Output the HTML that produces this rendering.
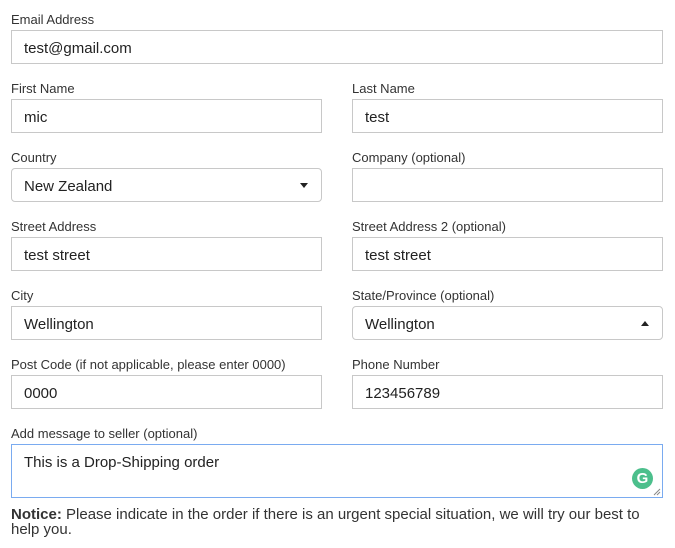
<!DOCTYPE html>
<html><head><meta charset="utf-8"><style>
body{margin:0;width:675px;height:548px;background:#fff;font-family:"Liberation Sans",sans-serif;color:#333;position:relative;overflow:hidden}
.l{position:absolute;font-size:13px;color:#333;line-height:16px}
.i{position:absolute;box-sizing:border-box;border:1px solid #c8c8c8;height:34px;font-size:15px;color:#222;padding-left:12px;padding-top:2px;line-height:32px}
.s{border-radius:4px}
.c{position:absolute;right:13px;top:14px;width:0;height:0;border-left:4px solid transparent;border-right:4px solid transparent;border-top:5px solid #222}
.u{border-top:0;border-bottom:5px solid #222;top:14px}
</style></head><body>
<div class="l" style="left:11px;top:12px">Email Address</div>
<div class="i" style="left:11px;top:30px;width:652px">test@gmail.com</div>

<div class="l" style="left:11px;top:81px">First Name</div>
<div class="i" style="left:11px;top:99px;width:311px">mic</div>
<div class="l" style="left:352px;top:81px">Last Name</div>
<div class="i" style="left:352px;top:99px;width:311px">test</div>

<div class="l" style="left:11px;top:150px">Country</div>
<div class="i s" style="left:11px;top:168px;width:311px">New Zealand<span class="c"></span></div>
<div class="l" style="left:352px;top:150px">Company (optional)</div>
<div class="i" style="left:352px;top:168px;width:311px"></div>

<div class="l" style="left:11px;top:219px">Street Address</div>
<div class="i" style="left:11px;top:237px;width:311px">test street</div>
<div class="l" style="left:352px;top:219px">Street Address 2 (optional)</div>
<div class="i" style="left:352px;top:237px;width:311px">test street</div>

<div class="l" style="left:11px;top:288px">City</div>
<div class="i" style="left:11px;top:306px;width:311px">Wellington</div>
<div class="l" style="left:352px;top:288px">State/Province (optional)</div>
<div class="i s" style="left:352px;top:306px;width:311px">Wellington<span class="c u"></span></div>

<div class="l" style="left:11px;top:357px">Post Code (if not applicable, please enter 0000)</div>
<div class="i" style="left:11px;top:375px;width:311px">0000</div>
<div class="l" style="left:352px;top:357px">Phone Number</div>
<div class="i" style="left:352px;top:375px;width:311px">123456789</div>

<div class="l" style="left:11px;top:426px">Add message to seller (optional)</div>
<div class="i" style="left:11px;top:444px;width:652px;height:54px;border-color:#7aabf0;line-height:32px">This is a Drop-Shipping order
<div style="position:absolute;right:9px;top:23px;width:21px;height:21px;border-radius:50%;background:#4cbf8c;color:#fff;font-size:15px;font-weight:bold;line-height:21px;text-align:center;padding:0">G</div>
<svg style="position:absolute;right:1px;bottom:1px" width="8" height="8"><path d="M1 7L7 1M4 7L7 4" stroke="#888" stroke-width="1"/></svg></div>

<div style="position:absolute;left:11px;top:507px;width:650px;font-size:15px;line-height:15px;color:#333">
<b>Notice:</b> Please indicate in the order if there is an urgent special situation, we will try our best to help you.</div>
</body></html>
